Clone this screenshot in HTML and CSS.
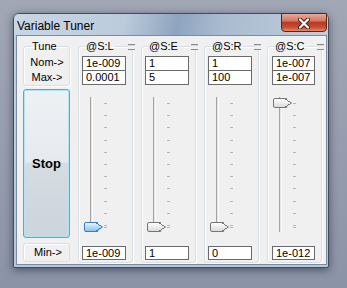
FILE: index.html
```html
<!DOCTYPE html>
<html lang="en">
<head>
  <meta charset="UTF-8">
  <title>Variable Tuner</title>
  <link rel="stylesheet" href="styles.css">
</head>
<body>

<div class="window">
  <div class="titlebar">
    <span class="title">Variable Tuner</span>
    <button class="close" type="button">
      <svg width="14" height="11" viewBox="0 0 14 11">
        <path d="M3 1.5 L11 9.5 M11 1.5 L3 9.5" stroke="#4a1f18" stroke-width="4" stroke-linecap="round"/>
        <path d="M3 1.5 L11 9.5 M11 1.5 L3 9.5" stroke="#fff" stroke-width="2.2" stroke-linecap="round"/>
      </svg>
    </button>
  </div>

  <div class="client">
    <div class="side">
      <fieldset class="group tune">
        <legend>Tune</legend>
        <div class="lbl">Nom-&gt;</div>
        <div class="lbl">Max-&gt;</div>
      </fieldset>
      <button class="stop" type="button">Stop</button>
      <div class="min">Min-&gt;</div>
    </div>

    <fieldset class="group var">
      <legend>@S:L</legend>
      <span class="grip"></span>
      <div class="field">1e-009</div>
      <div class="field">0.0001</div>
      <div class="slider">
        <div class="rail at-bottom"><span class="thumb hot"></span></div>
        <div class="ticks"><i></i><i></i><i></i><i></i><i></i><i></i><i></i><i></i><i></i><i></i><i class="end"></i></div>
      </div>
      <div class="field lo">1e-009</div>
    </fieldset>

    <fieldset class="group var">
      <legend>@S:E</legend>
      <span class="grip"></span>
      <div class="field">1</div>
      <div class="field">5</div>
      <div class="slider">
        <div class="rail at-bottom"><span class="thumb"></span></div>
        <div class="ticks"><i></i><i></i><i></i><i></i><i></i><i></i><i></i><i></i><i></i><i></i><i class="end"></i></div>
      </div>
      <div class="field lo">1</div>
    </fieldset>

    <fieldset class="group var">
      <legend>@S:R</legend>
      <span class="grip"></span>
      <div class="field">1</div>
      <div class="field">100</div>
      <div class="slider">
        <div class="rail at-bottom"><span class="thumb"></span></div>
        <div class="ticks"><i></i><i></i><i></i><i></i><i></i><i></i><i></i><i></i><i></i><i></i><i class="end"></i></div>
      </div>
      <div class="field lo">0</div>
    </fieldset>

    <fieldset class="group var narrow">
      <legend>@S:C</legend>
      <span class="grip"></span>
      <div class="field">1e-007</div>
      <div class="field">1e-007</div>
      <div class="slider">
        <div class="rail at-top"><span class="thumb"></span></div>
        <div class="ticks"><i></i><i></i><i></i><i></i><i></i><i></i><i></i><i></i><i></i><i></i><i class="end"></i></div>
      </div>
      <div class="field lo">1e-012</div>
    </fieldset>
  </div>
</div>

</body>
</html>
```

FILE: styles.css
```css
* {
  box-sizing: border-box;
  margin: 0;
  padding: 0;
}

body {
  background: linear-gradient(#a2a7b5, #8b93a6);
  height: 288px;
  overflow: hidden;
  padding: 13px 0 0 13px;
  font-family: 'Liberation Sans', Arial, sans-serif;
}

.window {
  width: 316px;
  height: 255px;
  border: 1px solid #434a58;
  border-radius: 6px 6px 2px 2px;
  background: linear-gradient(#c3d1e0, #b7c8da);
  padding: 0 1px 2px 2px;
  box-shadow: 0 2px 8px rgba(20, 25, 40, 0.55);
  display: flex;
  flex-direction: column;
}

.titlebar {
  height: 21px;
  display: flex;
  justify-content: space-between;
  align-items: flex-start;
  background: linear-gradient(100deg, #c9d6e4 0%, #bccbdc 35%, #8ea4bf 52%, #a9bbcf 66%, #c0cede 100%);
  margin: 0 -1px 0 -2px;
  padding-left: 3px;
  border-radius: 5px 5px 0 0;
}

.title {
  font-size: 12px;
  line-height: 12px;
  margin-top: 6px;
  color: #000;
}

.close {
  width: 46px;
  height: 19px;
  margin-right: 1px;
  margin-top: -1px;
  border: 1px solid #5e2218;
  border-radius: 0 0 4px 4px;
  background: linear-gradient(#e9a998 0%, #d47762 40%, #bb3a21 50%, #c94c31 78%, #df8a70 100%);
  display: flex;
  align-items: center;
  justify-content: center;
  padding-top: 1px;
}

.client {
  flex: 1;
  background-color: #f0f0f0;
  border: 1px solid #7b8ca2;
  padding: 5px 0 1px 6px;
  display: flex;
  gap: 8px;
}

.side {
  width: 47px;
  display: flex;
  flex-direction: column;
}

.group {
  border: 1px solid #d5dfe5;
  border-radius: 3px;
  box-shadow: inset 1px 1px 0 #fff, 1px 1px 0 #fff;
  min-inline-size: 0;
  padding: 0 3px;
  font-size: 11px;
  color: #000;
}

.group legend {
  font-size: 11px;
  line-height: 11px;
  margin-left: 3px;
  padding: 0 1px;
}

.tune {
  padding-top: 3px;
  padding-left: 4px;
}

.lbl {
  line-height: 15px;
  height: 15px;
  text-align: center;
}

.stop {
  margin-top: 3px;
  height: 149px;
  border: 1px solid #3cb3e4;
  border-radius: 3px;
  box-shadow: inset 0 0 0 1px #b4e3f6;
  background: linear-gradient(#eef1f4 0%, #e6eaee 49%, #d5dce2 50%, #ccd4dc 100%);
  font-family: 'Liberation Sans', Arial, sans-serif;
  font-weight: bold;
  font-size: 13px;
  color: #000;
}

.min {
  margin-top: 5px;
  height: 19px;
  border: 1px solid #d9dfe3;
  border-radius: 3px;
  box-shadow: inset 1px 1px 0 #fff;
  font-size: 11px;
  line-height: 17px;
  text-align: center;
  padding-left: 3px;
}

.var {
  width: 55px;
  position: relative;
  padding-top: 4px;
  padding-bottom: 2px;
}

.grip {
  position: absolute;
  right: -3px;
  top: -8px;
  width: 7px;
  height: 6px;
  background: #f0f0f0;
  border-top: 1px solid #8a8a8a;
  border-bottom: 1px solid #8a8a8a;
  box-shadow: inset 0 1px 0 #d8d8d8;
}

.field {
  width: 44px;
  height: 15px;
  border: 1px solid #6a6a6a;
  background: #fff;
  font-size: 11px;
  line-height: 13px;
  padding-left: 3px;
}

.field + .field {
  margin-top: -1px;
}

.narrow .field {
  width: 43px;
  margin-left: 1px;
}

.slider {
  margin-top: 12px;
  margin-left: 2px;
  height: 135px;
  display: flex;
  gap: 2px;
}

.rail {
  width: 18px;
  display: flex;
  flex-direction: column;
  background: linear-gradient(to right, transparent 6px, #a3a3a3 6px, #a3a3a3 7px, #e4e4e4 7px, #e4e4e4 8px, #fbfbfb 8px, #fbfbfb 9px, transparent 9px);
}

.at-bottom {
  justify-content: flex-end;
}

.at-top {
  padding-top: 1px;
}

.thumb {
  width: 19px;
  height: 10px;
  border: 1px solid #767676;
  border-radius: 2px 1px 1px 2px;
  background: linear-gradient(#fdfdfd, #dcdcdc);
  clip-path: polygon(0 0, 70% 0, 100% 50%, 70% 100%, 0 100%);
  position: relative;
}

.thumb::after {
  content: "";
  position: absolute;
  right: 0;
  top: 0;
  width: 6px;
  height: 8px;
  background: linear-gradient(to top right, transparent 45%, #767676 45%, #767676 60%, transparent 60%) top / 6px 4px no-repeat,
              linear-gradient(to bottom right, transparent 45%, #767676 45%, #767676 60%, transparent 60%) bottom / 6px 4px no-repeat;
}

.thumb.hot {
  border-color: #3c7fb1;
  background: linear-gradient(#eaf5fd, #bcdcf5 45%, #8fc1ea);
}

.thumb.hot::after {
  background: linear-gradient(to top right, transparent 45%, #3c7fb1 45%, #3c7fb1 60%, transparent 60%) top / 6px 4px no-repeat,
              linear-gradient(to bottom right, transparent 45%, #3c7fb1 45%, #3c7fb1 60%, transparent 60%) bottom / 6px 4px no-repeat;
}

.ticks {
  width: 3px;
  padding: 6px 0 4px;
  display: flex;
  flex-direction: column;
  justify-content: space-between;
}

.ticks i {
  display: block;
  height: 1px;
  background: #b5b5b5;
}

.ticks i.end {
  height: 3px;
  background: none;
  border-top: 1px solid #b5b5b5;
  border-bottom: 1px solid #b5b5b5;
}

.field.lo {
  margin-top: 14px;
  height: 14px;
  line-height: 12px;
}
```
